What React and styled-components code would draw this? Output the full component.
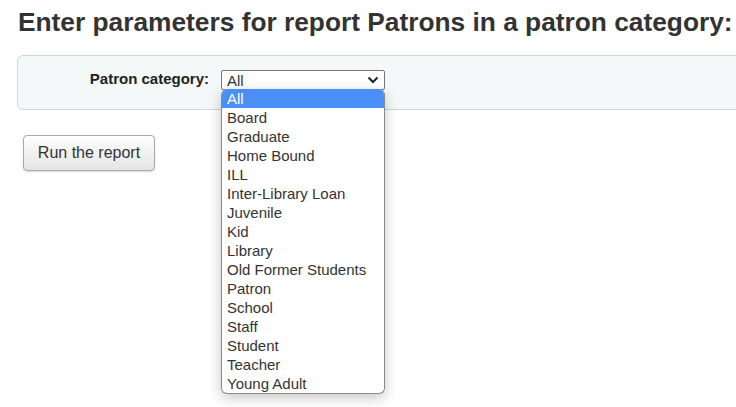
import React from 'react';
import styled, { createGlobalStyle } from 'styled-components';

const categories = [
  'All',
  'Board',
  'Graduate',
  'Home Bound',
  'ILL',
  'Inter-Library Loan',
  'Juvenile',
  'Kid',
  'Library',
  'Old Former Students',
  'Patron',
  'School',
  'Staff',
  'Student',
  'Teacher',
  'Young Adult',
];

const GlobalStyle = createGlobalStyle`
  body {
    margin: 0;
    background: #fff;
    font-family: "Liberation Sans", Arial, sans-serif;
    color: #333;
  }
`;

const Page = styled.div`
  width: 736px;
  height: 407px;
  overflow: hidden;
  padding: 6px 0 0 17px;
  box-sizing: border-box;
`;

const Title = styled.h1`
  margin: 0 0 17px 1px;
  font-size: 26.3px;
  line-height: 32px;
  font-weight: bold;
  color: #333;
  white-space: nowrap;
`;

const Fieldset = styled.div`
  width: 740px;
  height: 55px;
  box-sizing: border-box;
  background: #f4f8f9;
  border: 1px solid #cdd6d9;
  border-radius: 6px;
  display: flex;
  align-items: flex-start;
  padding-top: 14px;
`;

const Label = styled.label`
  width: 191px;
  text-align: right;
  font-size: 15px;
  font-weight: bold;
  line-height: 17px;
  color: #222;
`;

const SelectWrap = styled.div`
  position: relative;
  margin-left: 12px;
`;

const Select = styled.div`
  width: 164px;
  height: 20px;
  box-sizing: border-box;
  border: 1px solid #767676;
  border-radius: 2px;
  background: #fff;
  display: flex;
  align-items: center;
  justify-content: space-between;
  padding: 0 5px 0 5px;
  font-size: 15px;
  color: #333;
`;

const Menu = styled.ul`
  position: absolute;
  top: 19px;
  left: 0;
  width: 164px;
  box-sizing: border-box;
  margin: 0;
  padding: 0;
  list-style: none;
  background: #fff;
  border: 1px solid #8a8a8a;
  border-top: none;
  border-radius: 6px;
  overflow: hidden;
  box-shadow: 0 4px 14px rgba(0, 0, 0, 0.22);
  z-index: 2;
`;

const Option = styled.li`
  height: 19px;
  line-height: 19px;
  padding-left: 5px;
  font-size: 15px;
  color: ${(p) => (p.$active ? '#fff' : '#333')};
  background: ${(p) => (p.$active ? '#4a8ff7' : 'transparent')};
  white-space: nowrap;
`;

const Actions = styled.div`
  padding: 25px 0 0 6px;
`;

const Button = styled.button`
  width: 132px;
  height: 36px;
  font-family: "Liberation Sans", Arial, sans-serif;
  font-size: 16px;
  color: #333;
  border: 1px solid #a9a9a9;
  border-radius: 4px;
  background: linear-gradient(#ffffff, #e4e4e4);
  box-shadow: 0 1px 2px rgba(0, 0, 0, 0.15);
  padding: 0;
`;

const Chevron = () => (
  <svg width="12" height="8" viewBox="0 0 12 8">
    <path d="M1.5 1.5 L6 6 L10.5 1.5" fill="none" stroke="#222" strokeWidth="2" />
  </svg>
);

const App = () => (
  <>
    <GlobalStyle />
    <Page>
      <Title>Enter parameters for report Patrons in a patron category:</Title>
      <Fieldset>
        <Label>Patron category:</Label>
        <SelectWrap>
          <Select>
            <span>All</span>
            <Chevron />
          </Select>
          <Menu>
            {categories.map((c, i) => (
              <Option key={c} $active={i === 0}>{c}</Option>
            ))}
          </Menu>
        </SelectWrap>
      </Fieldset>
      <Actions>
        <Button type="button">Run the report</Button>
      </Actions>
    </Page>
  </>
);

export default App;
